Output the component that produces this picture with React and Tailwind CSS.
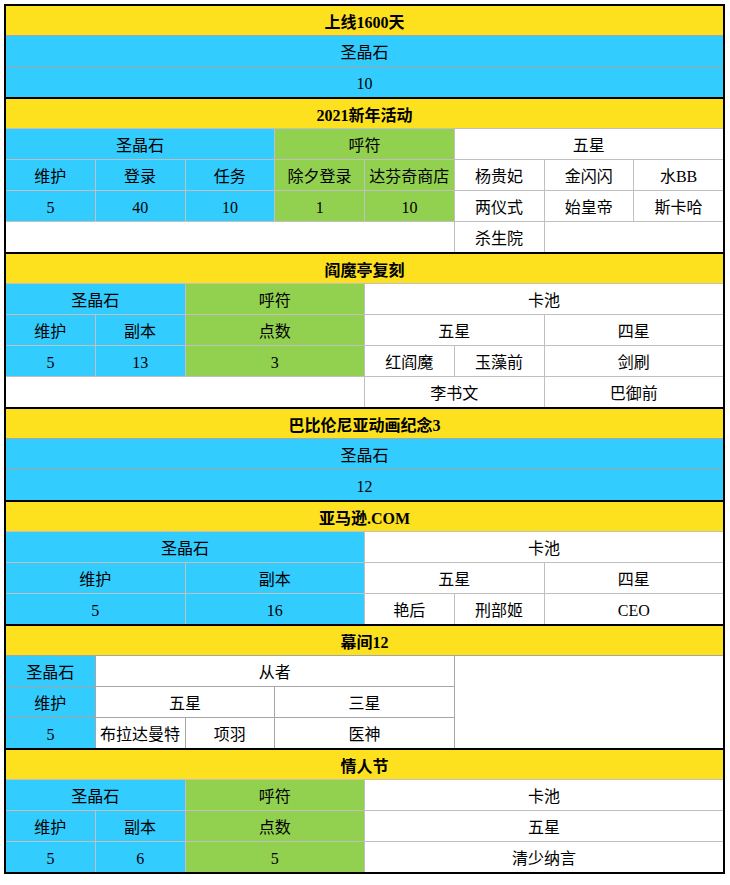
import React from "react";

const Y = "bg-[#fde11e]";
const C = "bg-[#33ccff]";
const G = "bg-[#92d050]";
const W = "bg-white";

function Cell({ bg = W, span = "", children, bold = false }) {
  return (
    <div
      className={`${bg} ${span} flex items-center justify-center pt-[4px] text-[16px] leading-none text-black whitespace-nowrap ${bold ? "font-bold" : "font-normal"}`}
    >
      {children}
    </div>
  );
}

function Section({ gray = "bg-[#c0c0c0]", first = false, children }) {
  return (
    <div
      className={`grid grid-cols-8 grid-rows-[29px] auto-rows-[30px] gap-px ${gray} ${first ? "" : "border-t-2 border-black"}`}
    >
      {children}
    </div>
  );
}

function Title({ children }) {
  return (
    <Cell bg={Y} span="col-span-8" bold>
      {children}
    </Cell>
  );
}

export default function App() {
  return (
    <div
      className="bg-white w-[730px] h-[885px] pt-[4px] pl-[4px]"
      style={{ fontFamily: '"Liberation Serif", "Noto Sans CJK SC", serif' }}
    >
      <div className="w-[721px] border-2 border-black flex flex-col">
        {/* 1 */}
        <Section first gray="bg-[#a6a6a6]">
          <Title>上线1600天</Title>
          <Cell bg={C} span="col-span-8">圣晶石</Cell>
          <Cell bg={C} span="col-span-8">10</Cell>
        </Section>

        {/* 2 */}
        <Section>
          <Title>2021新年活动</Title>
          <Cell bg={C} span="col-span-3">圣晶石</Cell>
          <Cell bg={G} span="col-span-2">呼符</Cell>
          <Cell span="col-span-3">五星</Cell>

          <Cell bg={C}>维护</Cell>
          <Cell bg={C}>登录</Cell>
          <Cell bg={C}>任务</Cell>
          <Cell bg={G}>除夕登录</Cell>
          <Cell bg={G}>达芬奇商店</Cell>
          <Cell>杨贵妃</Cell>
          <Cell>金闪闪</Cell>
          <Cell>水BB</Cell>

          <Cell bg={C}>5</Cell>
          <Cell bg={C}>40</Cell>
          <Cell bg={C}>10</Cell>
          <Cell bg={G}>1</Cell>
          <Cell bg={G}>10</Cell>
          <Cell>两仪式</Cell>
          <Cell>始皇帝</Cell>
          <Cell>斯卡哈</Cell>

          <Cell span="col-span-5"></Cell>
          <Cell>杀生院</Cell>
          <Cell span="col-span-2"></Cell>
        </Section>

        {/* 3 */}
        <Section>
          <Title>阎魔亭复刻</Title>
          <Cell bg={C} span="col-span-2">圣晶石</Cell>
          <Cell bg={G} span="col-span-2">呼符</Cell>
          <Cell span="col-span-4">卡池</Cell>

          <Cell bg={C}>维护</Cell>
          <Cell bg={C}>副本</Cell>
          <Cell bg={G} span="col-span-2">点数</Cell>
          <Cell span="col-span-2">五星</Cell>
          <Cell span="col-span-2">四星</Cell>

          <Cell bg={C}>5</Cell>
          <Cell bg={C}>13</Cell>
          <Cell bg={G} span="col-span-2">3</Cell>
          <Cell>红阎魔</Cell>
          <Cell>玉藻前</Cell>
          <Cell span="col-span-2">剑刷</Cell>

          <Cell span="col-span-4"></Cell>
          <Cell span="col-span-2">李书文</Cell>
          <Cell span="col-span-2">巴御前</Cell>
        </Section>

        {/* 4 */}
        <Section gray="bg-[#a6a6a6]">
          <Title>巴比伦尼亚动画纪念3</Title>
          <Cell bg={C} span="col-span-8">圣晶石</Cell>
          <Cell bg={C} span="col-span-8">12</Cell>
        </Section>

        {/* 5 */}
        <Section>
          <Title>亚马逊.COM</Title>
          <Cell bg={C} span="col-span-4">圣晶石</Cell>
          <Cell span="col-span-4">卡池</Cell>

          <Cell bg={C} span="col-span-2">维护</Cell>
          <Cell bg={C} span="col-span-2">副本</Cell>
          <Cell span="col-span-2">五星</Cell>
          <Cell span="col-span-2">四星</Cell>

          <Cell bg={C} span="col-span-2">5</Cell>
          <Cell bg={C} span="col-span-2">16</Cell>
          <Cell>艳后</Cell>
          <Cell>刑部姬</Cell>
          <Cell span="col-span-2">CEO</Cell>
        </Section>

        {/* 6 */}
        <Section gray="bg-[#a6a6a6]">
          <Title>幕间12</Title>
          <Cell bg={C}>圣晶石</Cell>
          <Cell span="col-span-4">从者</Cell>
          <Cell span="col-span-3 row-span-3"></Cell>

          <Cell bg={C}>维护</Cell>
          <Cell span="col-span-2">五星</Cell>
          <Cell span="col-span-2">三星</Cell>

          <Cell bg={C}>5</Cell>
          <Cell>布拉达曼特</Cell>
          <Cell>项羽</Cell>
          <Cell span="col-span-2">医神</Cell>
        </Section>

        {/* 7 */}
        <Section>
          <Title>情人节</Title>
          <Cell bg={C} span="col-span-2">圣晶石</Cell>
          <Cell bg={G} span="col-span-2">呼符</Cell>
          <Cell span="col-span-4">卡池</Cell>

          <Cell bg={C}>维护</Cell>
          <Cell bg={C}>副本</Cell>
          <Cell bg={G} span="col-span-2">点数</Cell>
          <Cell span="col-span-4">五星</Cell>

          <Cell bg={C}>5</Cell>
          <Cell bg={C}>6</Cell>
          <Cell bg={G} span="col-span-2">5</Cell>
          <Cell span="col-span-4">清少纳言</Cell>
        </Section>
      </div>
    </div>
  );
}
